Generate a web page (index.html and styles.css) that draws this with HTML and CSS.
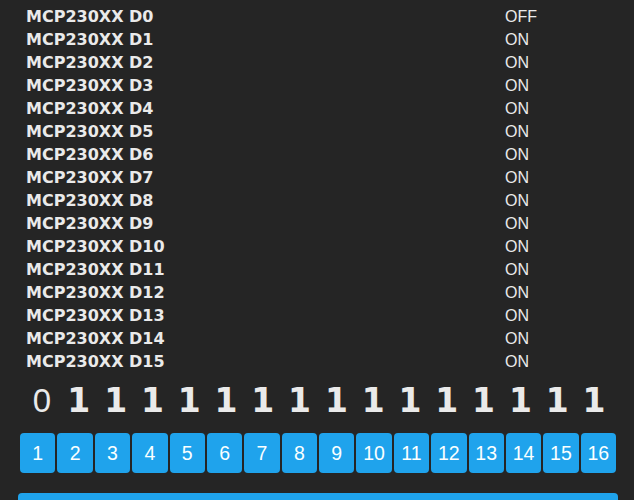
FILE: index.html
```html
<!DOCTYPE html>
<html>
<head>
<meta charset="utf-8">
<link rel="stylesheet" href="styles.css">
</head>
<body>
<div class="wrap">
  <div class="sensors">
    <div class="lbl">MCP230XX D0</div><div class="val">OFF</div>
    <div class="lbl">MCP230XX D1</div><div class="val">ON</div>
    <div class="lbl">MCP230XX D2</div><div class="val">ON</div>
    <div class="lbl">MCP230XX D3</div><div class="val">ON</div>
    <div class="lbl">MCP230XX D4</div><div class="val">ON</div>
    <div class="lbl">MCP230XX D5</div><div class="val">ON</div>
    <div class="lbl">MCP230XX D6</div><div class="val">ON</div>
    <div class="lbl">MCP230XX D7</div><div class="val">ON</div>
    <div class="lbl">MCP230XX D8</div><div class="val">ON</div>
    <div class="lbl">MCP230XX D9</div><div class="val">ON</div>
    <div class="lbl">MCP230XX D10</div><div class="val">ON</div>
    <div class="lbl">MCP230XX D11</div><div class="val">ON</div>
    <div class="lbl">MCP230XX D12</div><div class="val">ON</div>
    <div class="lbl">MCP230XX D13</div><div class="val">ON</div>
    <div class="lbl">MCP230XX D14</div><div class="val">ON</div>
    <div class="lbl">MCP230XX D15</div><div class="val">ON</div>
  </div>
  <div class="digits">
    <span class="d0">0</span><span class="d1">1</span><span class="d1">1</span><span class="d1">1</span><span class="d1">1</span><span class="d1">1</span><span class="d1">1</span><span class="d1">1</span><span class="d1">1</span><span class="d1">1</span><span class="d1">1</span><span class="d1">1</span><span class="d1">1</span><span class="d1">1</span><span class="d1">1</span><span class="d1">1</span>
  </div>
  <div class="buttons">
    <button class="btn">1</button><button class="btn">2</button><button class="btn">3</button><button class="btn">4</button><button class="btn">5</button><button class="btn">6</button><button class="btn">7</button><button class="btn">8</button><button class="btn">9</button><button class="btn">10</button><button class="btn">11</button><button class="btn">12</button><button class="btn">13</button><button class="btn">14</button><button class="btn">15</button><button class="btn">16</button>
  </div>
  <div class="bar"></div>
</div>
</body>
</html>
```
FILE: styles.css
```css
html, body {
  margin: 0;
  padding: 0;
  background: #252525;
  color: #eaeaea;
}
.wrap {
  width: 600px;
  margin-left: 18px;
}
.sensors {
  display: grid;
  grid-template-columns: 479px 1fr;
  grid-auto-rows: 23px;
  padding: 5px 0 0 8px;
  font-size: 16px;
  line-height: 23px;
}
.lbl {
  font-family: "DejaVu Sans", sans-serif;
  font-weight: bold;
}
.val {
  font-family: "Liberation Sans", sans-serif;
}
.digits {
  display: flex;
  justify-content: center;
  height: 40px;
  margin-top: 8px;
  font-size: 33px;
  line-height: 40px;
}
.digits span {
  width: 36.8px;
  text-align: center;
}
.d0 {
  font-family: "Liberation Sans", sans-serif;
  font-weight: normal;
}
.d1 {
  font-family: "DejaVu Sans", sans-serif;
  font-weight: bold;
}
.buttons {
  display: grid;
  grid-template-columns: repeat(16, 1fr);
  gap: 2px;
  padding: 0 2px;
  margin-top: 12px;
}
.btn {
  height: 40px;
  border: 0;
  border-radius: 4px;
  background: #1fa3ec;
  color: #faffff;
  font-family: "Liberation Sans", sans-serif;
  font-size: 19.5px;
  padding: 0;
}
.bar {
  margin-top: 20px;
  height: 40px;
  border-radius: 4px;
  background: #1fa3ec;
}
```
